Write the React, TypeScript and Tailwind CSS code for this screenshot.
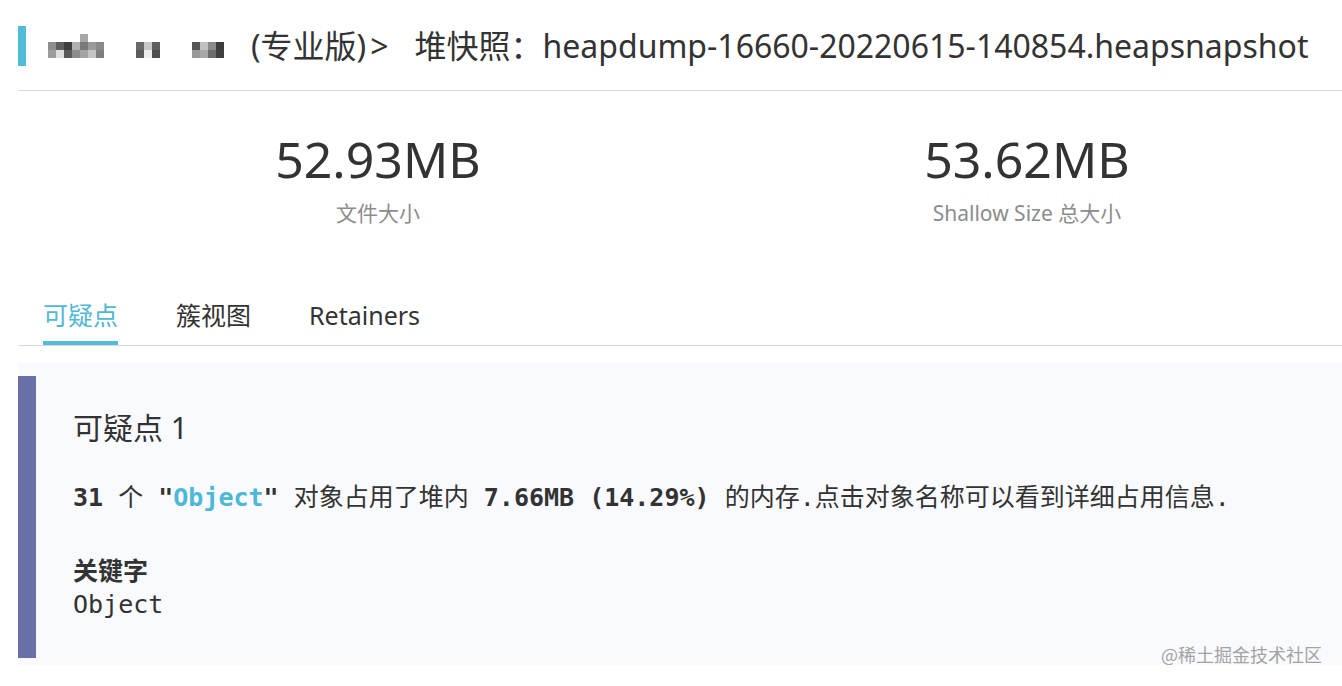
import React from "react";

const sans = { fontFamily: '"Noto Sans", "Noto Sans CJK SC", sans-serif' };

function Pix({ cells }: { cells: (string | null)[][] }) {
  return (
    <div className="flex flex-col">
      {cells.map((row, i) => (
        <div key={i} className="flex">
          {row.map((c, j) => (
            <div key={j} className="w-[8px] h-[8px]" style={{ backgroundColor: c ?? "transparent" }} />
          ))}
        </div>
      ))}
    </div>
  );
}

export default function App() {
  const b1 = [
    [null, null, null, null, "#a8a8a8", null, null],
    ["#8e8e8e", "#5e5e5e", "#3e3e3e", "#b0b0b0", "#7a7a7a", "#9a9a9a", "#8a8a8a"],
    ["#9c9c9c", "#dedede", "#5a5a5a", "#8c8c8c", "#a4a4a4", "#c4c4c4", "#7e7e7e"],
  ];
  const b2 = [
    ["#6a6a6a", "#c8c8c8", "#5e5e5e"],
    ["#5c5c5c", "#eeeeee", "#4e4e4e"],
  ];
  const b3 = [
    ["#555555", "#c0c0c0", "#8a8a8a", "#3c3c3c"],
    ["#9a9a9a", "#a8a8a8", "#6c6c6c", "#404040"],
  ];

  return (
    <div className="relative w-[1342px] h-[686px] overflow-hidden bg-white pl-[18px] text-[#333333]" style={sans}>
      {/* Header */}
      <div className="pt-[26px] pb-[24px] border-b border-[#d9d9d9]">
        <div className="flex items-center h-[40px]">
          <div className="w-[8px] h-[40px] bg-[#51bcd9]" />
          <div className="ml-[22px] flex items-end h-[24px]">
            <Pix cells={b1} />
            <div className="ml-[32px]">
              <Pix cells={b2} />
            </div>
            <div className="ml-[32px]">
              <Pix cells={b3} />
            </div>
          </div>
          <div className="ml-[27px] text-[32px] leading-[40px] whitespace-nowrap text-[#333333] flex">
            <span>(专业版)</span>
            <span className="ml-[4px]">&gt;</span>
            <span className="ml-[26px]">堆快照：heapdump-16660-20220615-140854.heapsnapshot</span>
          </div>
        </div>
      </div>

      {/* Stats */}
      <div className="flex mt-[43px] pl-[160px]">
        <div className="w-[400px] flex flex-col items-center">
          <div className="text-[50px] leading-[50px] text-[#333333]">52.93MB</div>
          <div className="mt-[15px] text-[21px] leading-[28px] text-[#8c8c8c]">文件大小</div>
        </div>
        <div className="ml-[249px] w-[400px] flex flex-col items-center">
          <div className="text-[50px] leading-[50px] text-[#333333]">53.62MB</div>
          <div className="mt-[15px] text-[21px] leading-[28px] text-[#8c8c8c]">Shallow Size 总大小</div>
        </div>
      </div>

      {/* Tabs */}
      <div className="mt-[72px] flex border-b border-[#d9d9d9]">
        <div className="ml-[25px] flex flex-col">
          <div className="text-[25px] leading-[32px] text-[#4fb8d6] pb-[10px]">可疑点</div>
          <div className="h-[4px] bg-[#52bcd9]" />
        </div>
        <div className="ml-[58px] flex flex-col">
          <div className="text-[25px] leading-[32px] text-[#333333] pb-[14px]">簇视图</div>
        </div>
        <div className="ml-[58px] flex flex-col">
          <div className="text-[25px] leading-[32px] text-[#333333] pb-[14px]">Retainers</div>
        </div>
      </div>

      {/* Card */}
      <div className="mt-[17px] bg-[#f9fafd] pt-[13px] pb-[7px]">
        <div className="flex h-[282px]">
          <div className="w-[18px] bg-[#6970a8]" />
          <div className="pl-[37px] pt-[32px]">
            <div className="text-[30px] leading-[40px] text-[#333333]">可疑点 1</div>
            <div
              className="mt-[32px] text-[25px] leading-[36px] whitespace-nowrap text-[#333333]"
              style={{ fontFamily: '"DejaVu Sans Mono", "Noto Sans CJK SC", monospace' }}
            >
              <span className="font-bold">31</span> 个{" "}
              <span className="font-bold">
                "<span className="text-[#4db7d8]">Object</span>"
              </span>{" "}
              对象占用了堆内 <span className="font-bold">7.66MB (14.29%)</span> 的内存.点击对象名称可以看到详细占用信息.
            </div>
            <div
              className="mt-[35px] text-[25px] leading-[36px] font-bold text-[#333333]"
              style={{ fontFamily: '"Noto Sans CJK SC", sans-serif' }}
            >
              关键字
            </div>
            <div className="text-[25px] leading-[36px] text-[#333333]" style={{ fontFamily: '"DejaVu Sans Mono", monospace' }}>
              Object
            </div>
          </div>
        </div>
      </div>

      {/* Watermark */}
      <div
        className="absolute right-[20px] top-[642px] text-[18px] leading-[24px] text-[#a3a3a3] whitespace-nowrap"
        style={{ fontFamily: '"Noto Sans CJK SC", sans-serif' }}
      >
        @稀土掘金技术社区
      </div>
    </div>
  );
}
